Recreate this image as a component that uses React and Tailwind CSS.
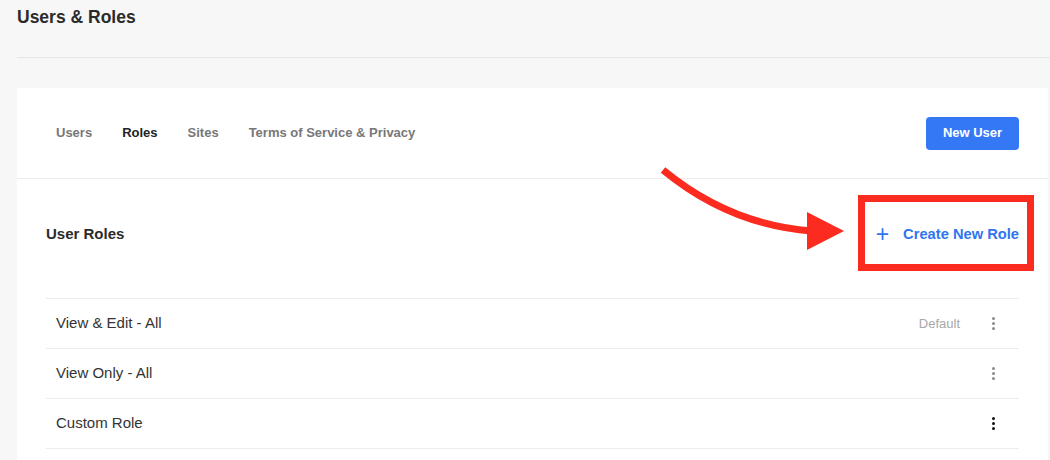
import React from "react";

const ROLES = [
  { name: "View & Edit - All", isDefault: true, dark: false },
  { name: "View Only - All", isDefault: false, dark: false },
  { name: "Custom Role", isDefault: false, dark: true },
];

function Kebab({ dark }) {
  const dot = dark ? "bg-[#111]" : "bg-[#8a8a8a]";
  return (
    <button className="flex flex-col items-center gap-[2px] w-[12px]">
      <span className={`w-[3px] h-[3px] rounded-full ${dot}`} />
      <span className={`w-[3px] h-[3px] rounded-full ${dot}`} />
      <span className={`w-[3px] h-[3px] rounded-full ${dot}`} />
    </button>
  );
}

export default function App() {
  return (
    <div className="relative w-[1050px] h-[460px] overflow-hidden bg-[#f7f7f7] pl-[17px] font-['Liberation_Sans',Arial,sans-serif]">
      {/* Page header */}
      <div className="h-[58px] border-b border-[#e6e6e6]">
        <h1 className="pt-[6px] text-[17.5px] leading-[22px] font-bold text-[#2b2b2b]">Users &amp; Roles</h1>
      </div>

      {/* Card */}
      <div className="mt-[30px] w-[1031px] bg-white h-[400px]">
        {/* Tabs */}
        <div className="flex items-center h-[91px] pl-[39px] pr-[29px] border-b border-[#ececec]">
          <nav className="flex gap-[30px] text-[13px] font-bold">
            <a className="text-[#777]">Users</a>
            <a className="text-[#222]">Roles</a>
            <a className="text-[#777]">Sites</a>
            <a className="text-[#777]">Terms of Service &amp; Privacy</a>
          </nav>
          <button className="ml-auto w-[93px] h-[33px] rounded-[4px] bg-[#3478f6] text-white text-[13px] font-bold">
            New User
          </button>
        </div>

        {/* Section header */}
        <div className="flex items-start justify-between h-[119px] pt-[45px] px-[29px]">
          <h2 className="text-[15px] leading-[20px] font-bold text-[#2b2b2b]">User Roles</h2>
          <button className="relative flex items-center gap-[14px] text-[14.7px] leading-[20px] font-bold text-[#2f74f0]">
            <span className="text-[23px] font-normal leading-[20px]">+</span>
            Create New Role
            <span className="absolute -left-[18px] -right-[15px] -top-[29px] -bottom-[27px] border-[7px] border-[#fb2b1f]" />
          </button>
        </div>

        {/* Roles list */}
        <div className="mx-[29px] border-t border-[#ececec]">
          {ROLES.map((r) => (
            <div key={r.name} className="flex items-center h-[50px] pl-[10px] pr-[20px] border-b border-[#ececec]">
              <span className="text-[15px] text-[#333]">{r.name}</span>
              {r.isDefault && <span className="ml-auto mr-[27px] text-[13px] text-[#a8a8a8]">Default</span>}
              <span className={r.isDefault ? "" : "ml-auto"}>
                <Kebab dark={r.dark} />
              </span>
            </div>
          ))}
        </div>
      </div>

      {/* Annotation arrow */}
      <svg className="absolute left-0 top-0 pointer-events-none" width="1050" height="460" viewBox="0 0 1050 460">
        <path d="M663 170 Q730 225 812 231" fill="none" stroke="#fb2b1f" strokeWidth="7" />
        <polygon points="807,212 844,231 807,250" fill="#fb2b1f" />
      </svg>
    </div>
  );
}
